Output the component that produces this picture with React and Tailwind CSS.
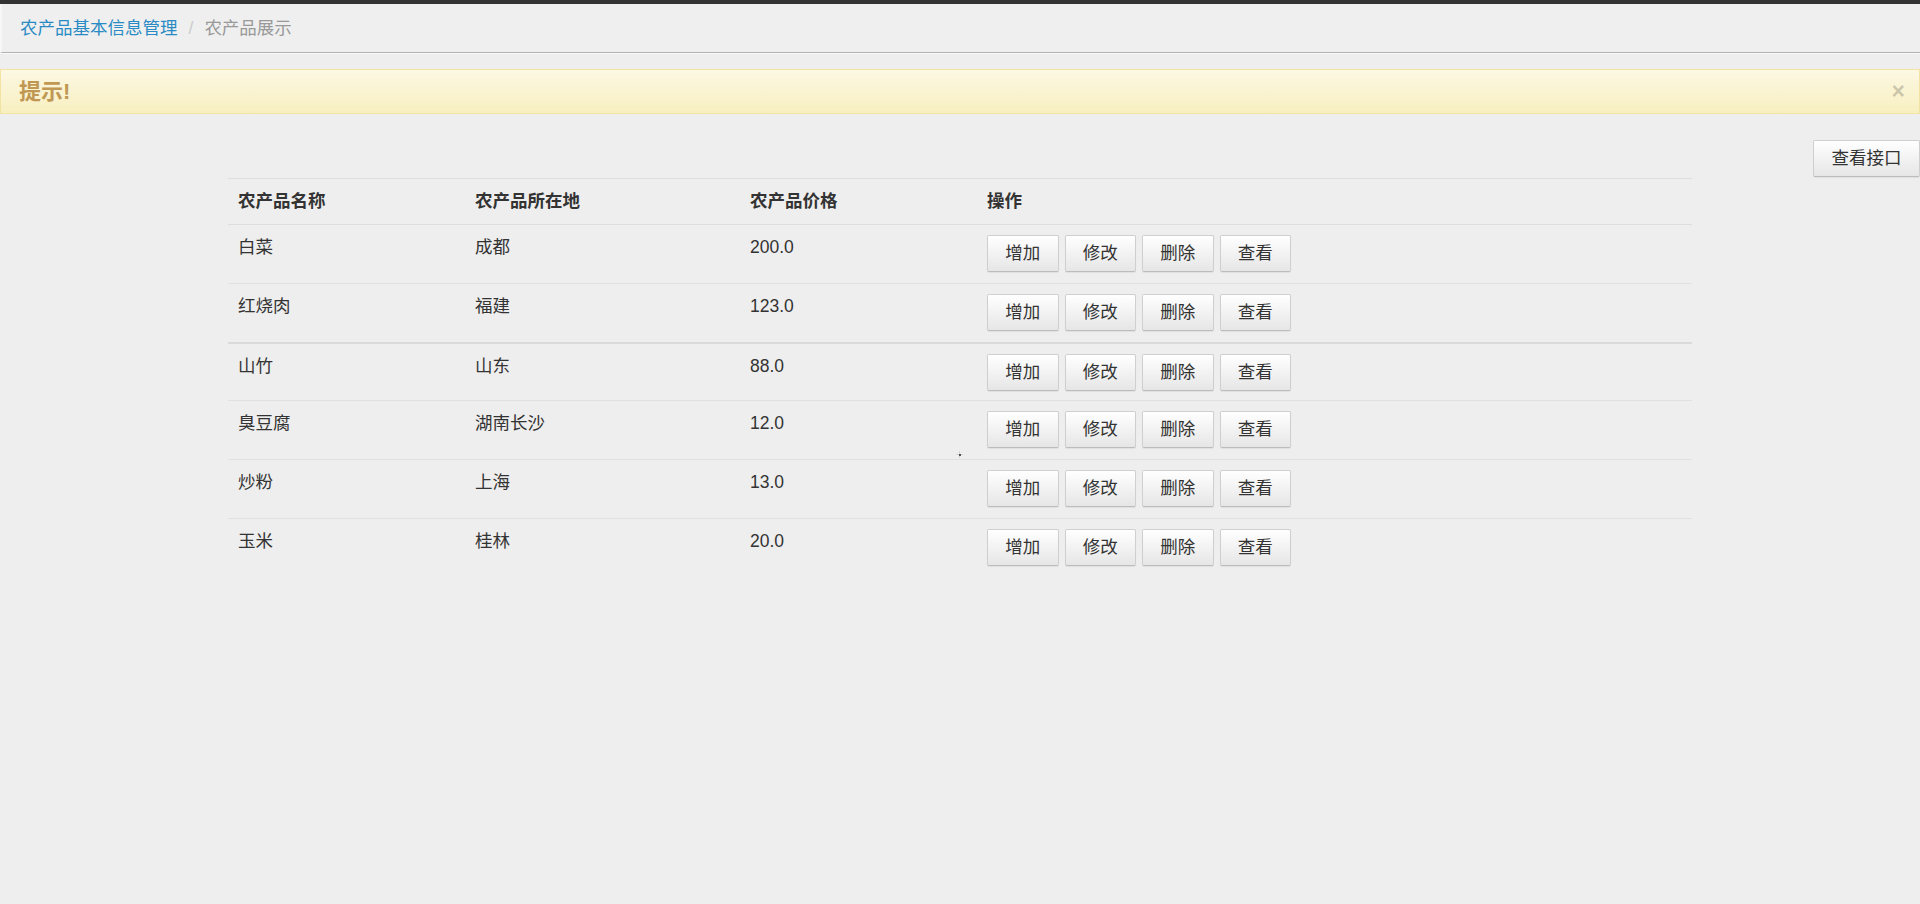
import React from "react";

const rows = [
  ["白菜", "成都", "200.0"],
  ["红烧肉", "福建", "123.0"],
  ["山竹", "山东", "88.0"],
  ["臭豆腐", "湖南长沙", "12.0"],
  ["炒粉", "上海", "13.0"],
  ["玉米", "桂林", "20.0"],
];

function Btn({ children, className = "" }) {
  return (
    <button
      className={
        "h-[37px] rounded-[2px] border border-[#cfcfcf] border-b-[#bcbcbc] bg-gradient-to-b from-white to-[#e6e6e6] text-[17.5px] leading-[25px] text-[#333] shadow-[inset_0_1px_0_rgba(255,255,255,0.6),0_1px_1px_rgba(0,0,0,0.06)] " +
        className
      }
    >
      {children}
    </button>
  );
}

export default function App() {
  return (
    <div
      className="min-h-screen w-full bg-[#eeeeee] text-[#333] text-[17.5px] leading-[25px] relative"
      style={{ fontFamily: '"Liberation Sans", "Noto Sans CJK SC", sans-serif' }}
    >
      <div className="h-[4px] bg-[#333333]" />
      <div className="h-[49px] border-b border-[#b3b3b3] border-l-2 border-l-[#f7f7f7] bg-[#efefef] flex items-center pl-[18px] shadow-[0_1px_0_rgba(255,255,255,0.6)]">
        <span className="text-[#2a8bc4]">农产品基本信息管理</span>
        <span className="px-[11px] text-[#cccccc]">/</span>
        <span className="text-[#999999]">农产品展示</span>
      </div>

      <div className="mt-[16px] h-[45px] border border-[#f3e3a3] bg-gradient-to-b from-[#fcf8e3] to-[#f8efc0] flex items-center justify-between pl-[18px] pr-[14px]">
        <span className="text-[22px] font-bold text-[#c09853] leading-[30px]">提示!</span>
        <span className="text-[23px] font-bold text-black/20 leading-none">×</span>
      </div>

      <div className="mt-[26px] flex justify-end">
        <Btn className="w-[107px]">查看接口</Btn>
      </div>

      <div className="ml-[228px] w-[1464px] mt-px">
        <div className="grid grid-cols-[237px_275px_237px_1fr] h-[47px] border-t border-b border-[#dedede] font-bold">
          <div className="pl-[10px] pt-[10px]">农产品名称</div>
          <div className="pl-[10px] pt-[10px]">农产品所在地</div>
          <div className="pl-[10px] pt-[10px]">农产品价格</div>
          <div className="pl-[10px] pt-[10px]">操作</div>
        </div>
        {rows.map((r, i) => (
          <div
            key={i}
            className={
              "grid grid-cols-[237px_275px_237px_1fr] " +
              (i === 0
                ? "h-[58px]"
                : i === 2
                ? "h-[58px] border-t-2 border-[#dadada]"
                : "h-[59px] border-t border-[#e0e0e0]")
            }
          >
            <div className="pl-[10px] pt-[10px]">{r[0]}</div>
            <div className="pl-[10px] pt-[10px]">{r[1]}</div>
            <div className="pl-[10px] pt-[10px]">{r[2]}</div>
            <div className="pl-[10px] pt-[10px] flex gap-[6px] items-start">
              <Btn className="w-[71.5px]">增加</Btn>
              <Btn className="w-[71.5px]">修改</Btn>
              <Btn className="w-[71.5px]">删除</Btn>
              <Btn className="w-[71.5px]">查看</Btn>
            </div>
          </div>
        ))}
      </div>

      <div className="absolute left-[956px] top-[451px] w-[7px] h-[7px] flex items-center justify-center">
        <div className="absolute w-[7px] h-px bg-black/10" />
        <div className="absolute w-px h-[7px] bg-black/10" />
        <div className="w-[2px] h-[2px] bg-[#222] rounded-full" />
      </div>
    </div>
  );
}
